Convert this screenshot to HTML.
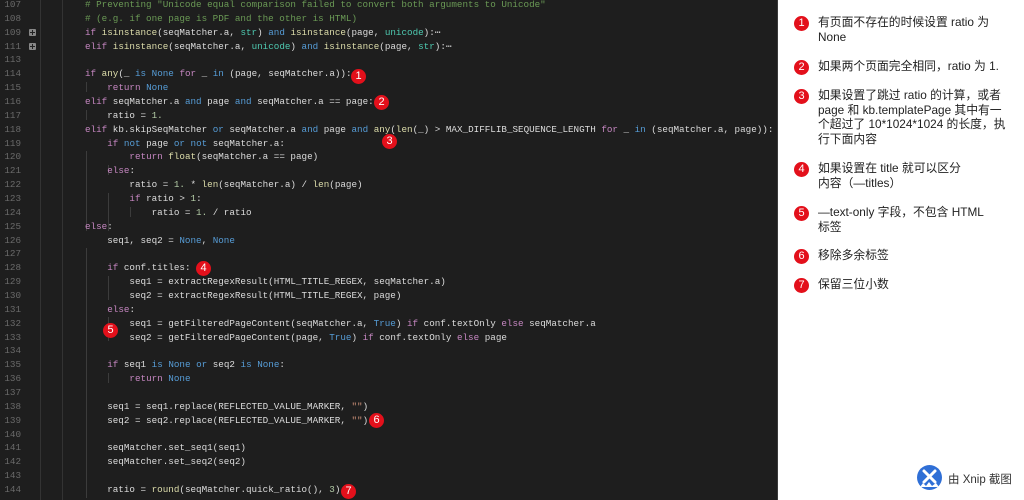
<!DOCTYPE html>
<html><head><meta charset="utf-8"><style>
*{margin:0;padding:0;box-sizing:border-box}
body{width:1024px;height:500px;overflow:hidden;background:#fff;position:relative;font-family:"Liberation Sans","Noto Sans CJK SC",sans-serif}
#code{position:absolute;left:0;top:0;width:778px;height:500px;background:#1e1e1e;overflow:hidden;border-right:1px solid #3a3a3a}
.l{position:absolute;left:0;height:14px;line-height:14px;font-family:"Liberation Mono",monospace;font-size:9.25px;white-space:pre;color:#dcdcdc}
.n{position:absolute;left:0;width:21px;text-align:right;color:#6a6a6a}
.c{position:absolute;left:85px}
.k{color:#c586c0}.b{color:#569cd6}.f{color:#dcdcaa}.g{color:#6a9955}.m{color:#b5cea8}.s{color:#ce9178}.t{color:#4ec9b0}
.vl{position:absolute;top:0;height:500px;width:1px;background:#333}
.fold{position:absolute;left:29px;width:7px;height:7px;background:#888;border-radius:1px}
.fold:after{content:"";position:absolute;left:1px;top:3px;width:5px;height:1px;background:#222}
.fold:before{content:"";position:absolute;left:3px;top:1px;width:1px;height:5px;background:#222}
.dot{position:absolute;width:15px;height:15px;border-radius:50%;background:#e3101b;color:#fff;font-size:11px;line-height:15px;text-align:center;font-family:"Liberation Sans",sans-serif}
.ig{position:absolute;width:1px;background:#3c3c3c}
.it{position:absolute;left:818px;font-size:11.8px;line-height:14.6px;color:#222;width:200px}
.rd{position:absolute;left:794px;width:15px;height:15px;border-radius:50%;background:#e3101b;color:#fff;font-size:11px;line-height:15px;text-align:center}
</style></head><body>
<div id="code">
<div class="vl" style="left:40px"></div>
<div class="vl" style="left:62px"></div>
<div class="ig" style="left:86px;top:82px;height:10px"></div>
<div class="ig" style="left:86px;top:110px;height:10px"></div>
<div class="ig" style="left:86px;top:151px;height:80px"></div>
<div class="ig" style="left:108px;top:165px;height:10px"></div>
<div class="ig" style="left:108px;top:193px;height:38px"></div>
<div class="ig" style="left:130px;top:207px;height:10px"></div>
<div class="ig" style="left:86px;top:248px;height:250px"></div>
<div class="ig" style="left:108px;top:276px;height:24px"></div>
<div class="ig" style="left:108px;top:317px;height:24px"></div>
<div class="ig" style="left:108px;top:373px;height:10px"></div>

<div class="l" style="top:-2px"><span class="n">107</span><span class="c g"># Preventing "Unicode equal comparison failed to convert both arguments to Unicode"</span></div>
<div class="l" style="top:11.9px"><span class="n">108</span><span class="c g"># (e.g. if one page is PDF and the other is HTML)</span></div>
<div class="l" style="top:25.7px"><span class="n">109</span><span class="c"><span class="k">if</span> <span class="f">isinstance</span>(seqMatcher.a, <span class="t">str</span>) <span class="b">and</span> <span class="f">isinstance</span>(page, <span class="t">unicode</span>):⋯</span></div>
<div class="l" style="top:39.6px"><span class="n">111</span><span class="c"><span class="k">elif</span> <span class="f">isinstance</span>(seqMatcher.a, <span class="t">unicode</span>) <span class="b">and</span> <span class="f">isinstance</span>(page, <span class="t">str</span>):⋯</span></div>
<div class="fold" style="top:29px"></div><div class="fold" style="top:43px"></div>
<div class="l" style="top:53.4px"><span class="n">113</span></div>
<div class="l" style="top:67.3px"><span class="n">114</span><span class="c"><span class="k">if</span> <span class="f">any</span>(_ <span class="b">is</span> <span class="b">None</span> <span class="k">for</span> _ <span class="b">in</span> (page, seqMatcher.a)):</span></div>
<div class="l" style="top:81.2px"><span class="n">115</span><span class="c">    <span class="k">return</span> <span class="b">None</span></span></div>
<div class="l" style="top:95px"><span class="n">116</span><span class="c"><span class="k">elif</span> seqMatcher.a <span class="b">and</span> page <span class="b">and</span> seqMatcher.a == page:</span></div>
<div class="l" style="top:108.9px"><span class="n">117</span><span class="c">    ratio = <span class="m">1.</span></span></div>
<div class="l" style="top:122.7px"><span class="n">118</span><span class="c"><span class="k">elif</span> kb.skipSeqMatcher <span class="b">or</span> seqMatcher.a <span class="b">and</span> page <span class="b">and</span> <span class="f">any</span>(<span class="f">len</span>(_) > MAX_DIFFLIB_SEQUENCE_LENGTH <span class="k">for</span> _ <span class="b">in</span> (seqMatcher.a, page)):</span></div>
<div class="l" style="top:136.6px"><span class="n">119</span><span class="c">    <span class="k">if</span> <span class="b">not</span> page <span class="b">or</span> <span class="b">not</span> seqMatcher.a:</span></div>
<div class="l" style="top:150.4px"><span class="n">120</span><span class="c">        <span class="k">return</span> <span class="f">float</span>(seqMatcher.a == page)</span></div>
<div class="l" style="top:164.3px"><span class="n">121</span><span class="c">    <span class="k">else</span>:</span></div>
<div class="l" style="top:178.2px"><span class="n">122</span><span class="c">        ratio = <span class="m">1.</span> * <span class="f">len</span>(seqMatcher.a) / <span class="f">len</span>(page)</span></div>
<div class="l" style="top:192px"><span class="n">123</span><span class="c">        <span class="k">if</span> ratio > <span class="m">1</span>:</span></div>
<div class="l" style="top:205.9px"><span class="n">124</span><span class="c">            ratio = <span class="m">1.</span> / ratio</span></div>
<div class="l" style="top:219.7px"><span class="n">125</span><span class="c"><span class="k">else</span>:</span></div>
<div class="l" style="top:233.6px"><span class="n">126</span><span class="c">    seq1, seq2 = <span class="b">None</span>, <span class="b">None</span></span></div>
<div class="l" style="top:247.4px"><span class="n">127</span></div>
<div class="l" style="top:261.3px"><span class="n">128</span><span class="c">    <span class="k">if</span> conf.titles:</span></div>
<div class="l" style="top:275.2px"><span class="n">129</span><span class="c">        seq1 = extractRegexResult(HTML_TITLE_REGEX, seqMatcher.a)</span></div>
<div class="l" style="top:289px"><span class="n">130</span><span class="c">        seq2 = extractRegexResult(HTML_TITLE_REGEX, page)</span></div>
<div class="l" style="top:302.9px"><span class="n">131</span><span class="c">    <span class="k">else</span>:</span></div>
<div class="l" style="top:316.7px"><span class="n">132</span><span class="c">        seq1 = getFilteredPageContent(seqMatcher.a, <span class="b">True</span>) <span class="k">if</span> conf.textOnly <span class="k">else</span> seqMatcher.a</span></div>
<div class="l" style="top:330.6px"><span class="n">133</span><span class="c">        seq2 = getFilteredPageContent(page, <span class="b">True</span>) <span class="k">if</span> conf.textOnly <span class="k">else</span> page</span></div>
<div class="l" style="top:344.4px"><span class="n">134</span></div>
<div class="l" style="top:358.3px"><span class="n">135</span><span class="c">    <span class="k">if</span> seq1 <span class="b">is</span> <span class="b">None</span> <span class="b">or</span> seq2 <span class="b">is</span> <span class="b">None</span>:</span></div>
<div class="l" style="top:372.2px"><span class="n">136</span><span class="c">        <span class="k">return</span> <span class="b">None</span></span></div>
<div class="l" style="top:386px"><span class="n">137</span></div>
<div class="l" style="top:399.9px"><span class="n">138</span><span class="c">    seq1 = seq1.replace(REFLECTED_VALUE_MARKER, <span class="s">""</span>)</span></div>
<div class="l" style="top:413.7px"><span class="n">139</span><span class="c">    seq2 = seq2.replace(REFLECTED_VALUE_MARKER, <span class="s">""</span>)</span></div>
<div class="l" style="top:427.6px"><span class="n">140</span></div>
<div class="l" style="top:441.4px"><span class="n">141</span><span class="c">    seqMatcher.set_seq1(seq1)</span></div>
<div class="l" style="top:455.3px"><span class="n">142</span><span class="c">    seqMatcher.set_seq2(seq2)</span></div>
<div class="l" style="top:469.2px"><span class="n">143</span></div>
<div class="l" style="top:483px"><span class="n">144</span><span class="c">    ratio = <span class="f">round</span>(seqMatcher.quick_ratio(), <span class="m">3</span>)</span></div>

<div class="dot" style="left:351px;top:69px">1</div>
<div class="dot" style="left:374px;top:95px">2</div>
<div class="dot" style="left:382px;top:134px">3</div>
<div class="dot" style="left:196px;top:261px">4</div>
<div class="dot" style="left:103px;top:323px">5</div>
<div class="dot" style="left:369px;top:413px">6</div>
<div class="dot" style="left:341px;top:484px">7</div>
</div>

<div class="rd" style="top:16px">1</div><div class="it" style="top:15px">有页面不存在的时候设置 ratio 为<br>None</div>
<div class="rd" style="top:60px">2</div><div class="it" style="top:59px">如果两个页面完全相同，ratio 为 1.</div>
<div class="rd" style="top:89px">3</div><div class="it" style="top:88px">如果设置了跳过 ratio 的计算，或者<br>page 和 kb.templatePage 其中有一<br>个超过了 10*1024*1024 的长度，执<br>行下面内容</div>
<div class="rd" style="top:162px">4</div><div class="it" style="top:161px">如果设置在 title 就可以区分<br>内容（—titles）</div>
<div class="rd" style="top:206px">5</div><div class="it" style="top:205px">—text-only 字段，不包含 HTML<br>标签</div>
<div class="rd" style="top:249px">6</div><div class="it" style="top:248px">移除多余标签</div>
<div class="rd" style="top:278px">7</div><div class="it" style="top:277px">保留三位小数</div>

<div style="position:absolute;left:917px;top:465px;width:25px;height:25px;border-radius:50%;background:#2f6fd6;overflow:hidden">
<svg width="25" height="25" viewBox="0 0 25 25"><path d="M7 6 L18 17 M18 6 L7 17" stroke="#fff" stroke-width="3" stroke-linecap="round"/><path d="M3 22 L6 18 L9 21 L12 17 L15 21 L19 18 L22 22Z" fill="#fff"/></svg></div>
<div style="position:absolute;left:948px;top:471px;font-size:11.5px;color:#333">由 Xnip 截图</div>
</body></html>
